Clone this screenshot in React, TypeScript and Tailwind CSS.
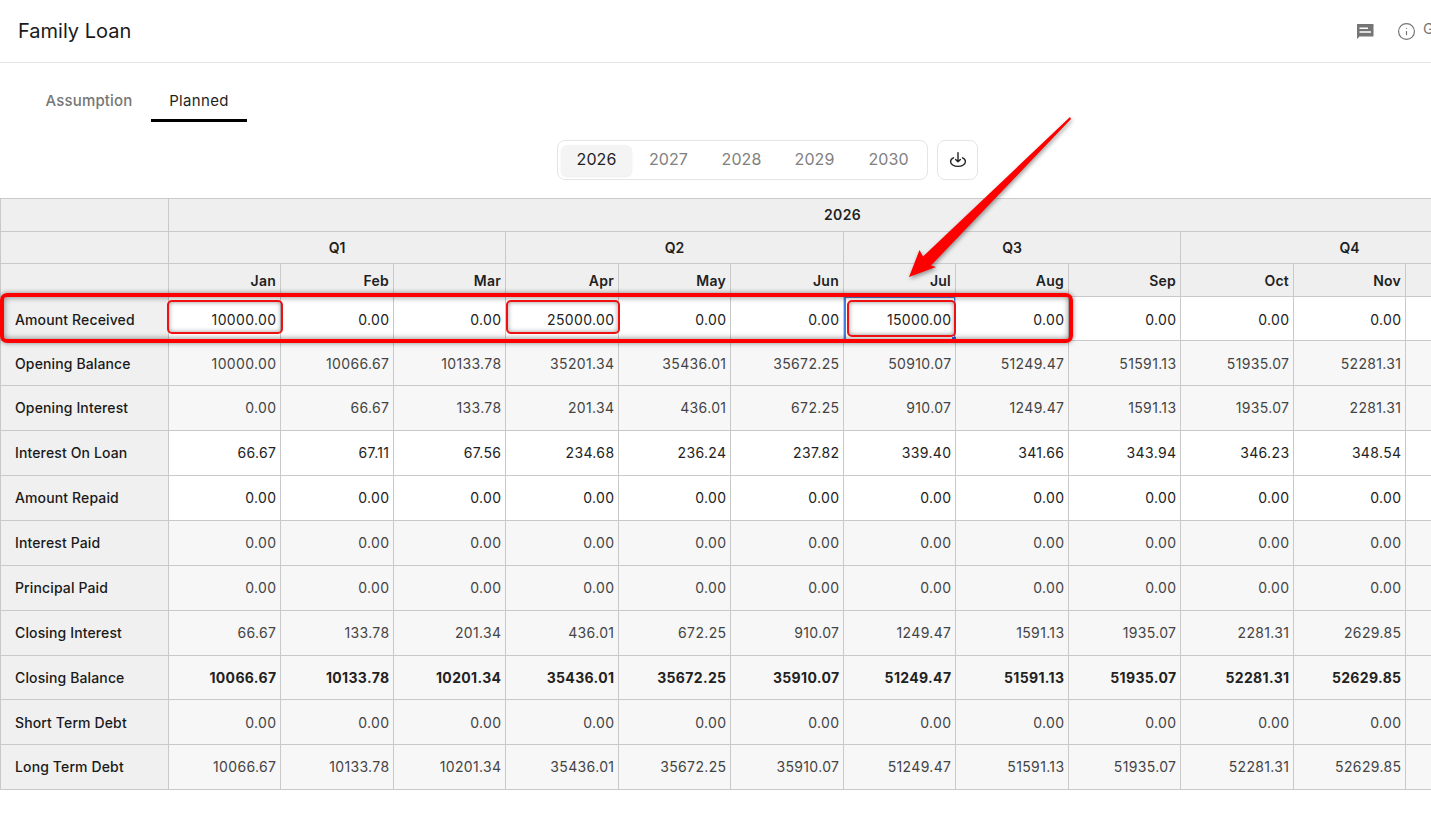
import { Info } from 'lucide-react';

const years = ['2026', '2027', '2028', '2029', '2030'];
const months = ['Jan', 'Feb', 'Mar', 'Apr', 'May', 'Jun', 'Jul', 'Aug', 'Sep', 'Oct', 'Nov', ''];
const zeros = Array(11).fill('0.00');

interface Row {
  label: string;
  values: string[];
  white?: boolean;
  bold?: boolean;
  height: string;
  nudge: string;
}

const rows: Row[] = [
  { label: 'Amount Received', white: true, height: 'h-[44px]', nudge: 'pt-[1px]', values: ['10000.00', '0.00', '0.00', '25000.00', '0.00', '0.00', '15000.00', '0.00', '0.00', '0.00', '0.00'] },
  { label: 'Opening Balance', height: 'h-[45px]', nudge: '', values: ['10000.00', '10066.67', '10133.78', '35201.34', '35436.01', '35672.25', '50910.07', '51249.47', '51591.13', '51935.07', '52281.31'] },
  { label: 'Opening Interest', height: 'h-[45px]', nudge: 'pb-[2px]', values: ['0.00', '66.67', '133.78', '201.34', '436.01', '672.25', '910.07', '1249.47', '1591.13', '1935.07', '2281.31'] },
  { label: 'Interest On Loan', white: true, height: 'h-[45px]', nudge: 'pb-[2px]', values: ['66.67', '67.11', '67.56', '234.68', '236.24', '237.82', '339.40', '341.66', '343.94', '346.23', '348.54'] },
  { label: 'Amount Repaid', white: true, height: 'h-[45px]', nudge: 'pb-[2px]', values: zeros },
  { label: 'Interest Paid', height: 'h-[45px]', nudge: 'pb-[2px]', values: zeros },
  { label: 'Principal Paid', height: 'h-[45px]', nudge: 'pb-[2px]', values: zeros },
  { label: 'Closing Interest', height: 'h-[45px]', nudge: 'pb-[2px]', values: ['66.67', '133.78', '201.34', '436.01', '672.25', '910.07', '1249.47', '1591.13', '1935.07', '2281.31', '2629.85'] },
  { label: 'Closing Balance', bold: true, height: 'h-[44px]', nudge: '', values: ['10066.67', '10133.78', '10201.34', '35436.01', '35672.25', '35910.07', '51249.47', '51591.13', '51935.07', '52281.31', '52629.85'] },
  { label: 'Short Term Debt', height: 'h-[45px]', nudge: '', values: zeros },
  { label: 'Long Term Debt', height: 'h-[45px]', nudge: 'pb-[2px]', values: ['10066.67', '10133.78', '10201.34', '35436.01', '35672.25', '35910.07', '51249.47', '51591.13', '51935.07', '52281.31', '52629.85'] },
];

function CommentIcon() {
  return (
    <svg width="20" height="20" viewBox="0 0 20 20" className="text-[#757575]">
      <path fill="currentColor" d="M2 3h16.5v12.5H4.5L2 18z" />
      <path stroke="#fff" strokeWidth="1.5" d="M4.5 7.2h8.5M4.5 11h11.5" />
    </svg>
  );
}

function DownloadIcon() {
  return (
    <svg width="18" height="18" viewBox="0 0 18 18" fill="none" stroke="#222" strokeWidth="1.4" strokeLinecap="round" strokeLinejoin="round">
      <path d="M4.5 6.8C2.7 7.6 1.6 8.9 1.6 10.4c0 2.9 3.3 5 7.4 5s7.4-2.1 7.4-5c0-1.5-1.1-2.8-2.9-3.6" />
      <path d="M9 1.8v8.8M6.6 8.4 9 10.8l2.4-2.4" />
    </svg>
  );
}

// red markup drawn on top of the screenshot
function Annotations() {
  return (
    <>
      <div className="absolute left-0 top-[293px] h-[50px] w-[1073px] rounded-[7px] border-4 border-[#ff0000] shadow-[0_0_5px_rgba(0,0,0,0.45),inset_0_0_6px_rgba(0,0,0,0.5)]" />
      <div className="absolute left-[167px] top-[300px] h-[34px] w-[116px] rounded-[5px] border-2 border-[#ee1111] shadow-[inset_0_0_5px_rgba(0,0,0,0.4)]" />
      <div className="absolute left-[506px] top-[300px] h-[34px] w-[114px] rounded-[5px] border-2 border-[#ee1111] shadow-[inset_0_0_5px_rgba(0,0,0,0.4)]" />
      <div className="absolute left-[847px] top-[300px] h-[37px] w-[109px] rounded-[5px] border-2 border-[#ee1111] shadow-[inset_0_0_5px_rgba(0,0,0,0.4)]" />
      <svg className="absolute left-0 top-0 h-[818px] w-[1431px] drop-shadow-[1px_2px_2px_rgba(0,0,0,0.4)]" viewBox="0 0 1431 818">
        <polygon fill="#ff0000" points="1070,117 1071,119 931,265.5 936,267 909,277 919.5,250 923,256.5" />
      </svg>
    </>
  );
}

export default function App() {
  return (
    <div className="relative h-[818px] w-[1431px] overflow-hidden bg-white font-['Inter',sans-serif] text-[#1f1f1f]">
      <header className="flex h-[63px] items-center border-b border-[#e6e6e6] pl-[18px]">
        <h1 className="text-[20px] font-normal text-[#1a1a1a]">Family Loan</h1>
        <div className="ml-auto mr-[-52px] flex shrink-0 items-center text-[#757575]">
          <CommentIcon />
          <Info size={19} strokeWidth={1.5} className="ml-[22px] mt-[1px]" />
          <span className="mb-[3px] ml-[7px] w-[60px] text-[15px]">Guide</span>
        </div>
      </header>

      <nav className="ml-[27px] mt-[17px] flex h-[42px]">
        <button className="w-[124px] text-center text-[15px] font-medium tracking-[0.15px] text-[#767676]">Assumption</button>
        <button className="w-[96px] border-b-[3px] border-black pt-[3px] text-center text-[15px] font-normal tracking-[0.35px] text-[#1f1f1f]">Planned</button>
      </nav>

      <div className="ml-[557px] mt-[18px] flex gap-[9px]">
        <div className="flex h-[40px] w-[371px] items-center rounded-[8px] border border-[#e5e5e5] pl-[3px]">
          {years.map((year, i) => (
            <span
              key={year}
              className={`flex h-[31px] shrink-0 items-center justify-center rounded-[6px] pb-[3px] text-[16px] tracking-[0.1px] ${i === 0 ? 'w-[71px] bg-[#f4f4f4] text-[#1f1f1f] shadow-[0_1px_2px_rgba(0,0,0,0.08)]' : 'w-[73px] text-[#808080]'} ${i === 4 ? 'pl-[2px]' : ''}`}
            >
              {year}
            </span>
          ))}
        </div>
        <button className="flex h-[40px] w-[41px] items-center justify-center rounded-[8px] border border-[#e5e5e5]">
          <DownloadIcon />
        </button>
      </div>

      <table className="mt-[18px] w-[1519px] max-w-none table-fixed border-collapse text-[14px]">
        <colgroup>
          <col className="w-[168px]" />
          {months.map((m, i) => (
            <col key={i} className={i % 2 === 0 ? 'w-[112px]' : 'w-[113px]'} />
          ))}
        </colgroup>
        <thead className="bg-[#efefef]">
          <tr className="h-[33px]">
            <th className="border border-[#c9c9c9]" />
            <th colSpan={12} className="border border-[#c9c9c9] pb-[2px] pr-[2px] font-semibold tracking-[0.4px]">2026</th>
          </tr>
          <tr className="h-[32px]">
            <th className="border border-[#c9c9c9]" />
            {['Q1', 'Q2', 'Q3', 'Q4'].map((q) => (
              <th key={q} colSpan={3} className="border border-[#c9c9c9] font-semibold">{q}</th>
            ))}
          </tr>
          <tr className="h-[33px]">
            <th className="border border-[#c9c9c9]" />
            {months.map((m, i) => (
              <th key={i} className="border border-[#c9c9c9] pr-[4px] text-right font-semibold tracking-[0.25px]">{m}</th>
            ))}
          </tr>
        </thead>
        <tbody>
          {rows.map((row) => (
            <tr key={row.label} className={row.height}>
              <td className={`border border-[#c9c9c9] bg-[#f0f0f0] pl-[14px] font-medium tracking-[0.13px] text-[#1a1a1a] ${row.nudge}`}>{row.label}</td>
              {row.values.map((value, i) => {
                const selected = row.label === 'Amount Received' && i === 6;
                return (
                  <td
                    key={i}
                    className={`relative border border-[#c9c9c9] pr-[3.6px] text-right tracking-[0.35px] ${row.nudge} ${row.white ? 'bg-white text-[#222222]' : 'bg-[#f7f7f7] text-[#444444]'} ${row.bold ? 'font-bold !text-[#222222]' : ''}`}
                  >
                    {value}
                    {selected && (
                      <div className="absolute inset-0 border border-l-2 border-[#4a7fe0]">
                        <div className="absolute bottom-[-4px] right-[-4px] h-[6px] w-[6px] bg-[#3b5fd9]" />
                      </div>
                    )}
                  </td>
                );
              })}
              <td className={`border border-[#c9c9c9] ${row.white ? 'bg-white' : 'bg-[#f7f7f7]'}`} />
            </tr>
          ))}
        </tbody>
      </table>

      <Annotations />
    </div>
  );
}
